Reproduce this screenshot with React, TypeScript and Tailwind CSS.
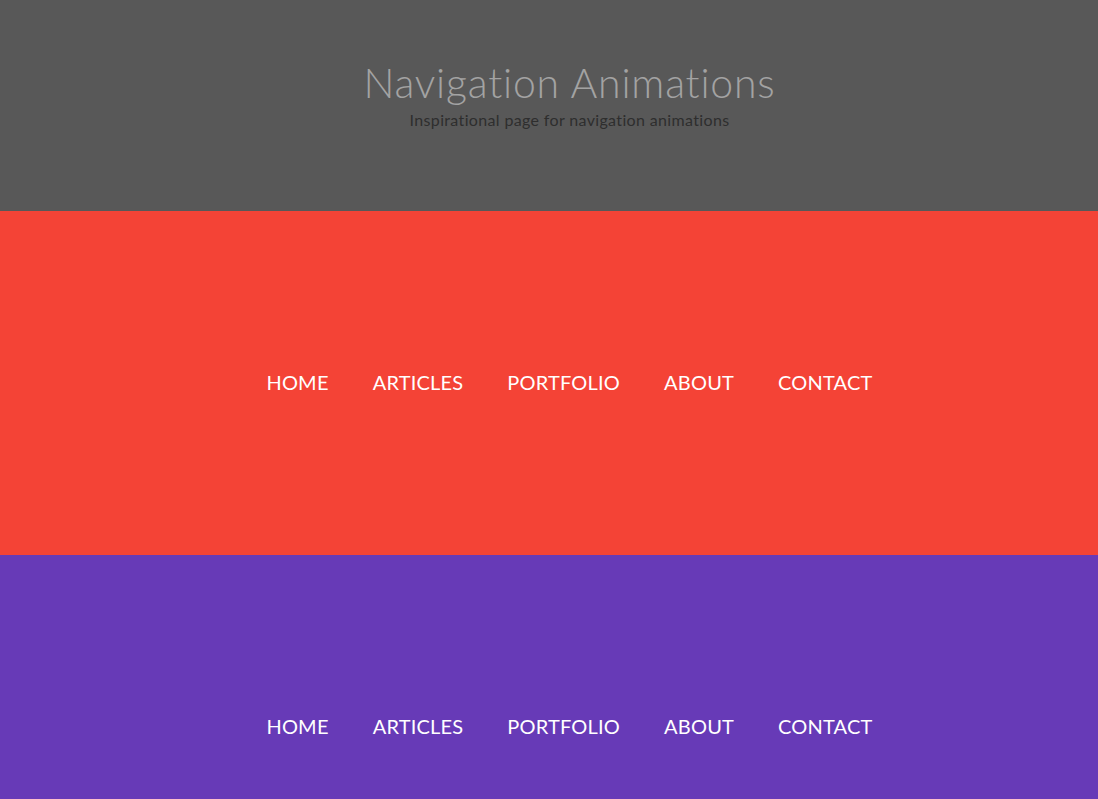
import React from 'react';

const LINKS = ['HOME', 'ARTICLES', 'PORTFOLIO', 'ABOUT', 'CONTACT'];

const NavBar: React.FC<{ bg: string }> = ({ bg }) => (
  <section className={`${bg} h-[344px] flex items-center justify-center pl-[41px] pt-[2px]`}>
    <nav>
      <ul className="flex items-center gap-[44px]">
        {LINKS.map((link) => (
          <li key={link}>
            <a href="#" className="text-white text-[20px] leading-none tracking-[0.2px]">
              {link}
            </a>
          </li>
        ))}
      </ul>
    </nav>
  </section>
);

export default function App() {
  return (
    <div className="font-['Lato','Open_Sans',sans-serif]">
      <header className="bg-[#585858] h-[211px] flex flex-col items-center pt-[61px] pl-[41px]">
        <h1 className="text-[#a3a3a3] text-[41px] font-light leading-[44px] tracking-[0.8px]">
          Navigation Animations
        </h1>
        <p className="text-[#2e2e2e] text-[16px] leading-5 mt-[5px] tracking-[0.35px]">
          Inspirational page for navigation animations
        </p>
      </header>
      <NavBar bg="bg-[#f44336]" />
      <NavBar bg="bg-[#673ab7]" />
    </div>
  );
}
